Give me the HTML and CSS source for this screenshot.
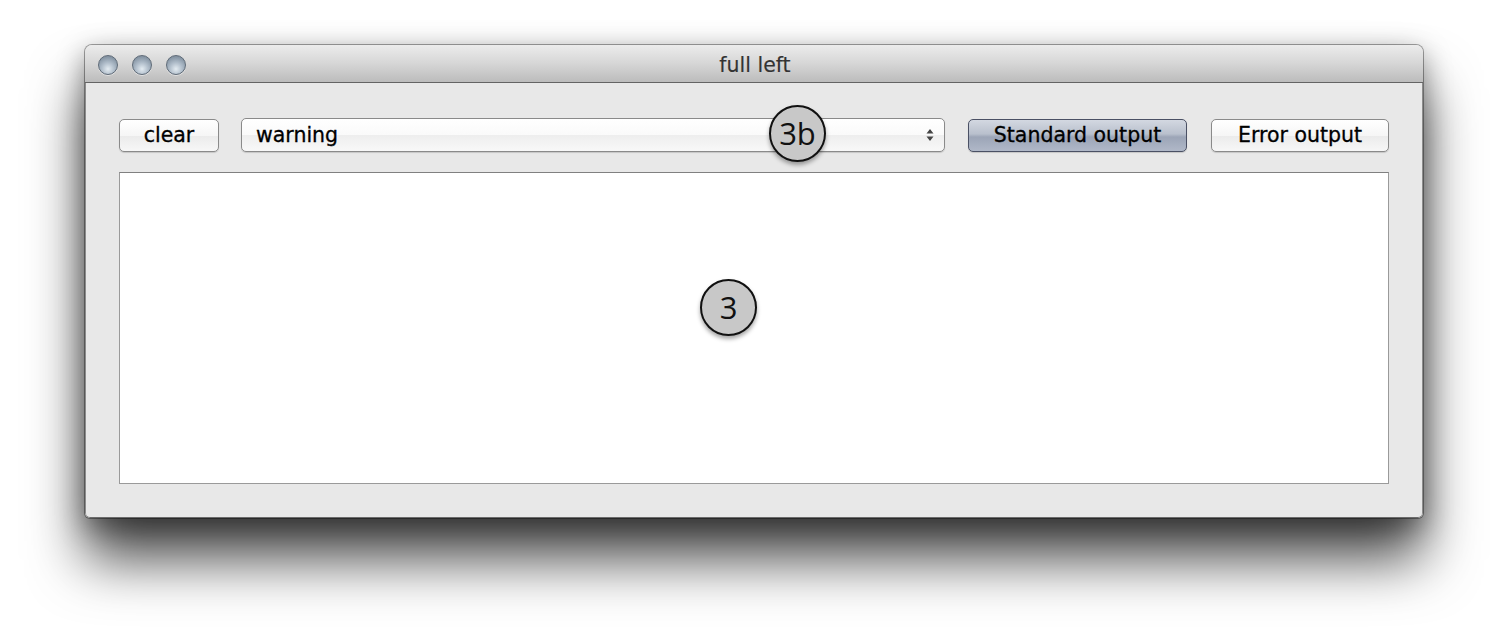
FILE: index.html
```html
<!DOCTYPE html>
<html>
<head>
<meta charset="utf-8">
<link rel="stylesheet" href="styles.css">
</head>
<body>
<div class="window">
  <div class="titlebar">
    <div class="lights">
      <span class="light"></span>
      <span class="light"></span>
      <span class="light"></span>
    </div>
    <div class="title">full left</div>
  </div>
  <div class="content">
    <div class="toolbar">
      <button class="btn clear">clear</button>
      <div class="select">
        <span>warning</span>
        <svg class="arrows" width="8" height="14" viewBox="0 0 8 14"><path d="M4 1 L7.5 5.5 L0.5 5.5 Z M4 13 L7.5 8.5 L0.5 8.5 Z" fill="#444"/></svg>
        <div class="badge badge-3b">3b</div>
      </div>
      <button class="btn std">Standard output</button>
      <button class="btn err">Error output</button>
    </div>
    <div class="output">
      <div class="badge badge-3">3</div>
    </div>
  </div>
</div>
</body>
</html>
```
FILE: styles.css
```css
html, body {
  margin: 0;
  padding: 0;
  background: #ffffff;
  width: 1500px;
  height: 644px;
  overflow: hidden;
}
body {
  padding-top: 45px;
  padding-left: 85px;
  box-sizing: border-box;
  font-family: "DejaVu Sans", "Liberation Sans", sans-serif;
}
.window {
  width: 1338px;
  height: 473px;
  background: #e8e8e8;
  border-radius: 7px 7px 5px 5px;
  box-shadow: 0 42px 55px rgba(0,0,0,0.7), 0 8px 28px rgba(0,0,0,0.4), 0 0 0 1px rgba(0,0,0,0.35);
  display: flex;
  flex-direction: column;
  overflow: hidden;
}
.titlebar {
  height: 37px;
  flex: none;
  background: linear-gradient(#ececec, #d6d6d6 50%, #bcbcbc);
  border-bottom: 1px solid #646464;
  display: flex;
  align-items: center;
  position: relative;
}
.lights {
  display: flex;
  gap: 14px;
  padding-left: 13px;
  padding-top: 3px;
}
.light {
  width: 20px;
  height: 20px;
  border-radius: 50%;
  box-sizing: border-box;
  border: 1px solid #5f6b78;
  background: radial-gradient(circle at 50% 72%, #e4ecf2 0%, #b0bdca 40%, #8a99a8 72%, #73808e 100%);
  box-shadow: 0 1px 0 rgba(255,255,255,0.5);
}
.title {
  position: absolute;
  left: 0;
  right: 0;
  top: 9px;
  text-align: center;
  font-size: 20.5px;
  color: #333;
  line-height: 22px;
  padding-left: 2px;
  -webkit-text-stroke: 0.15px #333;
}
.content {
  flex: 1;
  padding: 35px 33px 33px 33px;
  display: flex;
  flex-direction: column;
  gap: 20px;
  border-left: 1px solid #8c8c8c;
  border-right: 1px solid #8c8c8c;
  border-bottom: 1px solid #6c6c6c;
  border-radius: 0 0 5px 5px;
  box-sizing: border-box;
}
.toolbar {
  display: flex;
  align-items: center;
  height: 34px;
  position: relative;
}
.btn {
  font-family: "DejaVu Sans", "Liberation Sans", sans-serif;
  font-size: 20.5px;
  color: #000;
  -webkit-text-stroke: 0.3px #000;
  height: 33px;
  box-sizing: border-box;
  border: 1px solid #8a8a8a;
  border-radius: 5px;
  background: linear-gradient(#ffffff, #f6f6f6 50%, #ebebeb 51%, #f7f7f7);
  box-shadow: 0 1px 1px rgba(0,0,0,0.15);
  padding: 0;
  line-height: 30px;
  cursor: default;
}
.clear { width: 100px; margin-right: 22px; }
.select {
  width: 704px;
  height: 34px;
  margin-right: 23px;
  box-sizing: border-box;
  border: 1px solid #8a8a8a;
  border-radius: 5px;
  background: linear-gradient(#ffffff, #fafafa 50%, #eeeeee 51%, #f8f8f8);
  box-shadow: 0 1px 1px rgba(0,0,0,0.15);
  display: flex;
  align-items: center;
  justify-content: space-between;
  padding: 0 10px 0 14px;
  font-size: 20.5px;
  color: #000;
  -webkit-text-stroke: 0.3px #000;
  position: relative;
}
.arrows { display: block; }
.std {
  width: 219px;
  margin-right: 24px;
  border-color: #4a5064;
  background: linear-gradient(#d3d8e1, #b9c0cd 45%, #9ca5b7 55%, #b0b8c8);
}
.err { width: 178px; }
.output {
  flex: 1;
  background: #ffffff;
  border: 1px solid #9a9a9a;
  border-top-color: #808080;
  position: relative;
}
.badge {
  position: absolute;
  width: 57px;
  height: 57px;
  box-sizing: border-box;
  border-radius: 50%;
  background: #c8c8c8;
  border: 2px solid #111;
  box-shadow: 0 3px 4px rgba(0,0,0,0.35);
  font-family: "Open Sans", "Liberation Sans", sans-serif;
  font-size: 31px;
  color: #111;
  -webkit-text-stroke: 0;
  display: flex;
  align-items: center;
  justify-content: center;
  line-height: 1;
}
.badge-3b {
  left: 527px;
  top: -14px;
}
.badge-3 {
  left: 580px;
  top: 106px;
}
```
